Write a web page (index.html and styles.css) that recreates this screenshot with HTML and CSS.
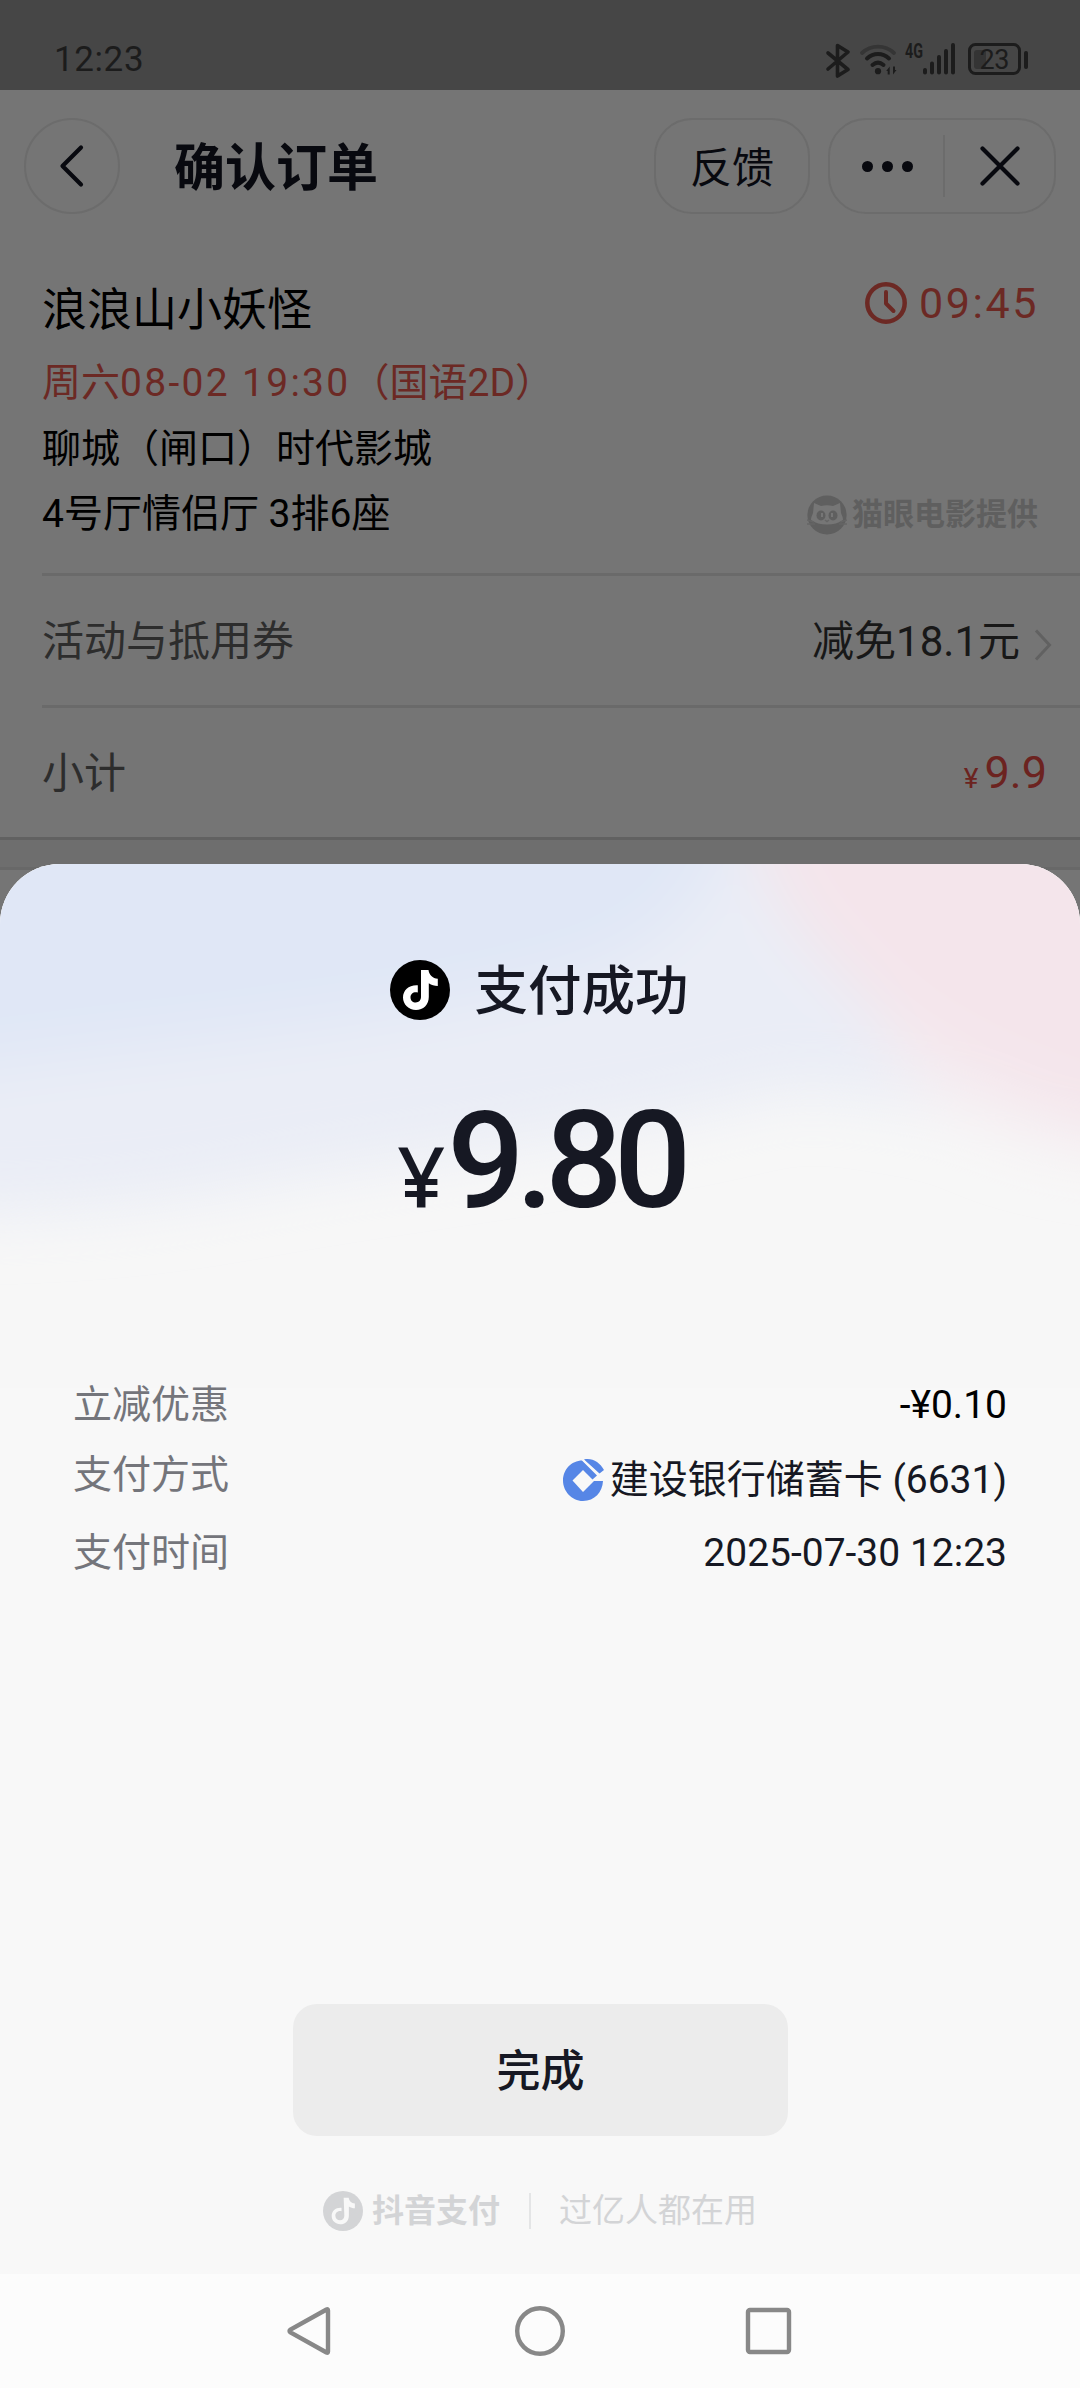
FILE: index.html
```html
<!DOCTYPE html>
<html lang="zh-CN">
<head>
  <meta charset="UTF-8">
  <meta name="viewport" content="width=device-width, initial-scale=1.0">
  <title>支付成功</title>
  <link rel="stylesheet" href="styles.css">
</head>
<body>
  <div class="page">
    <div class="status-bar">
      <span class="time">12:23</span>
      <svg class="status-icons" width="206" height="40" viewBox="824 40 206 40" fill="none" stroke="#1c1c1c">
        <path d="M828 53l20 16.500-10.500 6.500V45.500L848 52l-20 17" stroke-width="3.600" stroke-linejoin="round" stroke-linecap="round"/>
        <path d="M862 53c9-8.500 23-8.500 32 0" stroke="#353535" stroke-width="3.800" stroke-linecap="round"/>
        <path d="M867 58.500c6.500-6 15.500-6 22 0M872.500 65c3.500-3 7.500-3 11 0" stroke-width="4" stroke-linecap="round"/>
        <circle cx="878" cy="71.200" r="3.100" fill="#1c1c1c" stroke="none"/>
        <path d="M886.200 71l3.500-4.500v8h-2v-3.500zM896.500 70l-3.500 4.500v-8h2v3.500z" fill="#1c1c1c" stroke="none"/>
        <text class="net" x="905" y="57.500" textLength="18" lengthAdjust="spacingAndGlyphs">4G</text>
        <path d="M925 70v2.500M932 63.500v9M939 57v15.500M946 51v21.500M953 45v27.500" stroke-width="4" stroke-linecap="round"/>
        <rect x="969.500" y="44.500" width="50" height="29" rx="6" stroke-width="3"/>
        <rect x="974" y="50" width="12" height="19" rx="3" fill="#343434" stroke="none"/>
        <path d="M1026 53v14" stroke-width="4" stroke-linecap="round"/>
        <text class="level" x="979.500" y="69" textLength="30">23</text>
      </svg>
    </div>

    <div class="nav-bar">
      <div class="back">
        <svg width="30" height="48" viewBox="0 0 30 48"><path d="M24 5.500L5.500 24 24 42.500" class="line"/></svg>
      </div>
      <h1>确认订单</h1>
      <div class="feedback">反馈</div>
      <div class="capsule">
        <div class="more"><i></i><i></i><i></i></div>
        <div class="close">
          <svg width="48" height="48" viewBox="0 0 48 48"><path d="M6.500 6.500l35 35M41.500 6.500l-35 35" class="line"/></svg>
        </div>
      </div>
    </div>

    <div class="order">
      <div class="info">
        <div class="left">
          <h2>浪浪山小妖怪</h2>
          <p class="date">周六<span>08-02 19:30</span>（国语2D）</p>
          <p>聊城（闸口）时代影城</p>
          <p class="seat">4号厅情侣厅 3排6座</p>
        </div>
        <div class="right">
          <div class="countdown">
            <svg width="42" height="42" viewBox="0 0 42 42" fill="none" stroke="#6c2924">
              <circle cx="21" cy="21" r="18.700" stroke-width="4.500"/>
              <path d="M21 10v11.500l7.500 7.500" stroke-width="4" stroke-linecap="round" stroke-linejoin="round"/>
            </svg>
            <span>09:45</span>
          </div>
          <div class="provider">
            <svg width="40" height="40" viewBox="0 0 40 40">
              <circle cx="20" cy="20" r="19.600" fill="#5f5f5f"/>
              <path d="M7 8l7 3c4-1 8-1 12 0l7-3 1 10c1 3 2 4 2 7-8 6-24 6-32 0 0-3 1-4 2-7z" fill="#767676"/>
              <ellipse cx="14" cy="20.500" rx="4.500" ry="5" fill="#5f5f5f"/>
              <ellipse cx="26" cy="20.500" rx="4.500" ry="5" fill="#5f5f5f"/>
              <path d="M15 18v4M25 18v4" stroke="#767676" stroke-width="2"/>
              <path d="M18 25l2 1.500 2-1.500M0 25l7 2M0 29l8 0M40 25l-7 2M40 29l-8 0" stroke="#666" stroke-width="1.500" fill="none"/>
            </svg>
            <span>猫眼电影提供</span>
          </div>
        </div>
      </div>
      <div class="row">
        <span class="name">活动与抵用券</span>
        <span class="discount">减免18.1元</span>
        <svg width="18" height="34" viewBox="0 0 18 34"><path d="M2 2.500L15.500 17 2 31.500" fill="none" stroke="#616161" stroke-width="3"/></svg>
      </div>
      <div class="row">
        <span class="name">小计</span>
        <span class="subtotal"><small>¥</small>9.9</span>
      </div>
    </div>
    <div class="gap"></div>
  </div>

  <div class="sheet">
    <svg class="glow" width="1080" height="524" viewBox="0 0 1080 524">
      <defs>
        <filter id="soft" x="-20%" y="-30%" width="140%" height="160%"><feGaussianBlur stdDeviation="30"/></filter>
      </defs>
      <g filter="url(#soft)">
        <path d="M-90-90H1170V260C1000 280 880 220 780 230C640 270 400 295 240 325S0 345-90 355z" fill="#eaedf6"/>
        <path d="M840-90C840 50 860 180 930 230S1060 290 1170 300V-90z" fill="#f5eef2"/>
        <path d="M-90-90H730C730 0 700 60 600 105C420 165 150 180-90 215z" fill="#e0e7f6"/>
        <path d="M750-90C750 20 800 70 860 130S1000 230 1170 280V-90z" fill="#f4e5eb"/>
      </g>
    </svg>

    <div class="result">
      <svg width="60" height="60" viewBox="0 0 60 60">
        <circle cx="30" cy="30" r="30"/>
        <path class="note" d="M31 10h7.500c.6 4.800 4 8.300 9.300 8.800V26c-3.500 0-6.300-1-9-2.700V37c0 7.800-5.500 13-12.800 13S13 44.500 13 37.600C13 30 19 24.600 27.800 25.200v7.400c-4.300-1-7.300 1.300-7.300 4.800 0 3 2.300 5.100 5.200 5.100 3.300 0 5.300-2.300 5.300-5.700z"/>
      </svg>
      <span>支付成功</span>
    </div>
    <div class="amount"><span class="yen">¥</span>9.80</div>

    <ul class="details">
      <li class="off">
        <span class="label">立减优惠</span>
        <span class="value">-¥0.10</span>
      </li>
      <li class="method">
        <span class="label">支付方式</span>
        <span class="value">
          <svg width="42" height="44" viewBox="0 0 42 44">
            <path d="M20.500 2.500C9 2.500 1 12 1 22.500S9.500 43 21 43s19.500-9 20-20H32L21 34 10.500 22.500 21 12l9.500 9.500 4.500-4L20 2.500z" fill="#5686e6"/>
            <path d="M22 1.500c8-2 16 3 20 10.500l-4.500 3.500zM20.500 2.800l16 15" fill="#5686e6"/>
            <path d="M20 1l18 17" stroke="#f8f8f8" stroke-width="1.500"/>
          </svg>建设银行储蓄卡 (6631)</span>
      </li>
      <li class="when">
        <span class="label">支付时间</span>
        <span class="value">2025-07-30 12:23</span>
      </li>
    </ul>

    <button type="button" class="done">完成</button>

    <div class="footer">
      <svg width="40" height="40" viewBox="0 0 60 60">
        <circle cx="30" cy="30" r="30" fill="#d3d4d6"/>
        <path class="note" d="M31 10h7.500c.6 4.800 4 8.300 9.300 8.800V26c-3.500 0-6.300-1-9-2.700V37c0 7.800-5.500 13-12.800 13S13 44.500 13 37.600C13 30 19 24.600 27.800 25.200v5c-4.300-1-9.300 1.300-9.300 6.800 0 4 3 7 7 7s6.500-3 6.500-7z"/>
      </svg>
      <b>抖音支付</b>
      <i></i>
      <span>过亿人都在用</span>
    </div>
  </div>

  <div class="system-nav">
    <svg width="50" height="54" viewBox="0 0 50 54"><path d="M42.500 5.500Q44 4.500 44 6.500V47.500Q44 49.500 42.500 48.500L6.500 28.500Q4.500 27 6.500 25.500z"/></svg>
    <svg width="54" height="54" viewBox="0 0 54 54"><circle cx="27" cy="27" r="22.800"/></svg>
    <svg width="50" height="54" viewBox="0 0 50 54"><rect x="3" y="6" width="41" height="42" rx="2"/></svg>
  </div>
</body>
</html>
```

FILE: styles.css
```css
* {
  box-sizing: border-box;
}

body {
  margin: 0;
  position: relative;
  width: 1080px;
  height: 2388px;
  display: flex;
  flex-direction: column;
  justify-content: space-between;
  overflow: hidden;
  font-family: Roboto, "Noto Sans CJK SC", sans-serif;
  line-height: 1.2;
  background: #757575;
}

h1, h2, p, ul {
  margin: 0;
  padding: 0;
  font-weight: 400;
}

svg {
  display: block;
  flex: none;
}

/* status bar */
.status-bar {
  height: 90px;
  padding: 25px 50px 0 54px;
  display: flex;
  justify-content: space-between;
  background: #464646;
  color: #1c1c1c;
}

.time {
  font-size: 35px;
  line-height: 70px;
  letter-spacing: 0.6px;
}

.status-icons {
  margin-top: 15px;
}

.status-icons text {
  fill: #1c1c1c;
  stroke: none;
}

.net {
  font-size: 20px;
  font-weight: 700;
}

.level {
  font-size: 27px;
}

/* title bar */
.nav-bar {
  height: 150px;
  padding: 2px 24px 0;
  display: flex;
  align-items: center;
  color: #08090f;
}

.back, .feedback, .capsule {
  height: 96px;
  display: flex;
  align-items: center;
  justify-content: center;
  border: 2px solid #6c6c6c;
  border-radius: 38px;
}

.back {
  width: 96px;
  border-radius: 50%;
}

.line {
  fill: none;
  stroke: #08090f;
  stroke-width: 4.2px;
  stroke-linecap: round;
  stroke-linejoin: round;
}

.nav-bar h1 {
  margin: 0 auto 0 54px;
  padding-top: 5px;
  font-size: 51px;
  line-height: 70px;
  font-weight: 700;
}

.feedback {
  width: 156px;
  font-size: 42px;
  margin-right: 18px;
  padding-top: 6px;
}

.capsule {
  width: 228px;
}

.more {
  width: 115px;
  height: 62px;
  padding-left: 2px;
  display: flex;
  gap: 9px;
  align-items: center;
  justify-content: center;
  border-right: 2px solid #6c6c6c;
}

.more i {
  width: 11px;
  height: 11px;
  border-radius: 50%;
  background: #08090f;
}

.close {
  flex: 1;
  display: flex;
  justify-content: center;
}

/* order */
.order {
  padding-left: 42px;
  border-bottom: 3px solid #616161;
}

.info {
  height: 336px;
  display: flex;
  justify-content: space-between;
  border-bottom: 3px solid #6a6a6a;
}

.left {
  padding-top: 41px;
  color: #000;
}

.left h2 {
  font-size: 45px;
  line-height: 60px;
  margin-bottom: 10px;
}

.left p {
  font-size: 39px;
  line-height: 65.5px;
  white-space: pre;
}

.left .date {
  color: #6c2924;
}

.date span {
  letter-spacing: 2.3px;
}

.right {
  padding: 36px 42px 38px 0;
  display: flex;
  flex-direction: column;
  justify-content: space-between;
  align-items: flex-end;
}

.countdown, .provider {
  display: flex;
  align-items: center;
}

.countdown {
  gap: 12px;
  color: #6c2924;
  font-size: 43px;
  line-height: 54px;
}

.countdown span {
  letter-spacing: 2.6px;
  margin-right: -1px;
}

.provider {
  gap: 5px;
  color: #5f5f5f;
  font-size: 31px;
  line-height: 40px;
  font-weight: 700;
}

.row {
  height: 132px;
  display: flex;
  align-items: center;
  font-size: 42px;
}

.row:nth-child(2) {
  border-bottom: 3px solid #6a6a6a;
}

.row:last-child {
  height: 129px;
}

.name {
  margin-right: auto;
  padding-top: 3px;
  color: #2d2d2d;
}

.discount {
  color: #181818;
  margin-right: 14px;
  padding-top: 3px;
}

.row svg {
  margin: 8px 28px 0 0;
}

.subtotal {
  margin-right: 33px;
  color: #6c2320;
  font-size: 45px;
}

.subtotal small {
  font-size: 28px;
  margin-right: 6px;
}

.gap {
  height: 30px;
  background: #6e6e6e;
  border-bottom: 3px solid #686868;
}

/* payment result, slides over the order page */
.sheet {
  position: absolute;
  z-index: 1;
  top: 864px;
  left: 0;
  width: 1080px;
  height: 1410px;
  overflow: hidden;
  border-radius: 60px 60px 0 0;
  background: #f8f8f8;
  color: #161823;
}

.glow {
  position: absolute;
  z-index: -1;
  top: 0;
  left: 0;
  background: #f7f7f7;
}

.result {
  margin-top: 90px;
  height: 72px;
  display: flex;
  align-items: center;
  justify-content: center;
  gap: 25px;
  padding-right: 2px;
  font-size: 53.5px;
  font-weight: 500;
}

.result span {
  padding-top: 5px;
}

.note {
  fill: #fff;
}

.amount {
  height: 150px;
  margin-top: 60px;
  font-size: 136px;
  line-height: 150px;
  font-weight: 500;
  text-align: center;
  letter-spacing: -8.500px;
}

.yen {
  margin-right: 2px;
  font-family: "Noto Sans", sans-serif;
  font-size: 84px;
  letter-spacing: 0;
}

.details {
  margin-top: 139px;
  padding: 0 73px;
  list-style: none;
  font-size: 39px;
}

.details li {
  display: flex;
  justify-content: space-between;
  line-height: 60px;
}

.label {
  color: #74757b;
}

.value {
  display: flex;
  align-items: center;
}

.value svg {
  margin-right: 6px;
}

.off {
  height: 70px;
}

.off .value {
  height: 60px;
  color: #000;
}

.method {
  height: 78px;
}

.method .value {
  height: 69px;
}

.when .value {
  height: 60px;
}

.done {
  display: block;
  width: 495px;
  height: 132px;
  margin: 421px auto 0 293px;
  padding: 3px 0 0;
  border: 0;
  border-radius: 24px;
  background: #ececec;
  color: #161823;
  font-family: inherit;
  font-size: 44px;
  font-weight: 500;
  line-height: 52px;
}

.footer {
  margin: 51px 0 0 323px;
  height: 48px;
  display: flex;
  align-items: center;
  color: #d3d4d6;
  font-size: 32px;
}

.footer b {
  margin-left: 9px;
}

.footer i {
  width: 2px;
  height: 36px;
  margin: 0 28px 0 29px;
  background: #e4e5e6;
}

.footer span {
  font-size: 33px;
}

.footer .note {
  fill: #f8f8f8;
}

/* android keys */
.system-nav {
  height: 114px;
  padding: 0 285px 0 284px;
  display: flex;
  align-items: center;
  justify-content: space-between;
  background: #fcfcfc;
}

.system-nav svg {
  fill: none;
  stroke: #888;
  stroke-width: 4.4px;
}
```
